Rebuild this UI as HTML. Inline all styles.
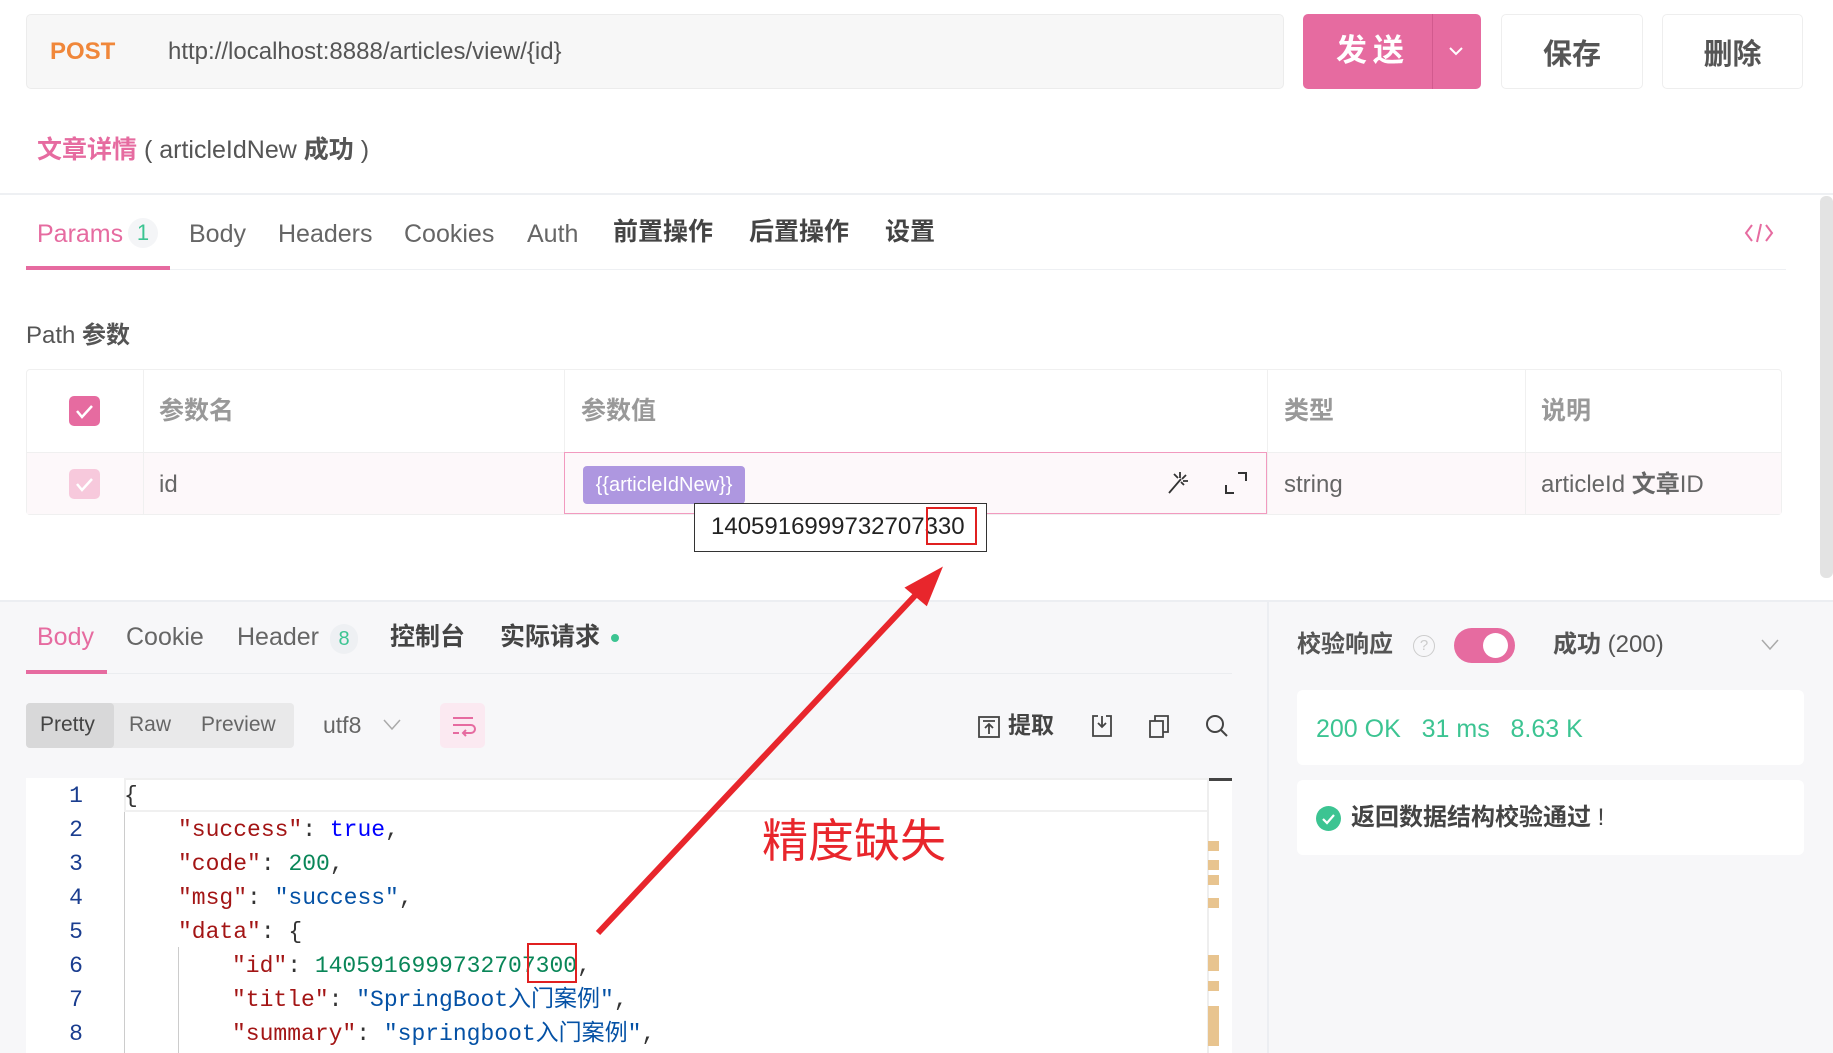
<!DOCTYPE html>
<html><head><meta charset="utf-8">
<style>
*{box-sizing:border-box;margin:0;padding:0}
body{width:1833px;height:1053px;overflow:hidden;background:#fff;font-family:"Liberation Sans","Noto Sans CJK SC",sans-serif;color:#555;position:relative}
.a{position:absolute;white-space:nowrap;line-height:1.25}
.btn{position:absolute;border:1px solid #eee;border-radius:5px;background:#fff;font-size:29px;font-weight:bold;color:#555;display:flex;align-items:center;justify-content:center}
.tab{position:absolute;font-size:25px;color:#666;top:216px;line-height:32px;white-space:nowrap}
.cb{position:absolute;font-size:25px;color:#999;font-weight:bold;line-height:32px}
.ln{position:absolute;left:26px;width:100px;text-align:center;color:#1a3d8f;font-family:"Liberation Mono",monospace;font-size:23px;line-height:30px}
.code{position:absolute;left:178px;white-space:pre;font-family:"Liberation Mono","Noto Sans CJK SC",monospace;font-size:23px;color:#333;line-height:30px;height:30px}
.k{color:#a31515}.s{color:#0451a5}.n{color:#098658}.b{color:#0000ff}
</style></head><body>
<div class="a" style="left:26px;top:14px;width:1258px;height:75px;background:#f7f7f7;border:1px solid #ececec;border-radius:5px"></div>
<div class="a" style="left:50px;top:37px;font-size:24px;font-weight:bold;color:#f0873a">POST</div>
<div class="a" style="left:168px;top:37px;font-size:24px;color:#555">http://localhost:8888/articles/view/{id}</div>
<div class="a" style="left:1303px;top:14px;width:178px;height:75px;background:#e66ba0;border-radius:5px"></div>
<div class="a" style="left:1432px;top:14px;width:1px;height:75px;background:#d25a8e"></div>
<div class="a" style="left:1336px;top:32px;font-size:31px;font-weight:bold;color:#fff;letter-spacing:6px">发送</div>
<svg class="a" style="left:1448px;top:45px" width="16" height="12"><path d="M2 3l6 6 6-6" stroke="#fff" stroke-width="2" fill="none"/></svg>
<div class="btn" style="left:1501px;top:14px;width:142px;height:75px">保存</div>
<div class="btn" style="left:1662px;top:14px;width:141px;height:75px">删除</div>
<div class="a" style="left:37px;top:134px;font-size:25px;line-height:32px;height:32px"><span style="color:#e66ba0;font-weight:bold">文章详情</span> <span style="color:#555">( articleIdNew <b>成功</b> )</span></div>
<div class="a" style="left:0;top:193px;width:1833px;height:2px;background:#eef0f3"></div>
<div class="tab" style="left:37px;color:#e66ba0;top:218px">Params</div>
<div class="a" style="left:128px;top:218px;width:30px;height:30px;border-radius:15px;background:#f4f5f7;color:#3cc492;font-size:22px;text-align:center;line-height:30px">1</div>
<div class="tab" style="left:189px;top:218px">Body</div>
<div class="tab" style="left:278px;top:218px">Headers</div>
<div class="tab" style="left:404px;top:218px">Cookies</div>
<div class="tab" style="left:527px;top:218px">Auth</div>
<div class="tab" style="left:613px;font-weight:bold;color:#444">前置操作</div>
<div class="tab" style="left:749px;font-weight:bold;color:#444">后置操作</div>
<div class="tab" style="left:885px;font-weight:bold;color:#444">设置</div>
<div class="a" style="left:26px;top:269px;width:1760px;height:1px;background:#eef0f3"></div>
<div class="a" style="left:26px;top:266px;width:144px;height:4px;background:#e66ba0"></div>
<svg class="a" style="left:1743px;top:221px" width="32" height="24"><path d="M9 4L3 12l6 8M23 4l6 8-6 8M18 3l-4 18" stroke="#e66ba0" stroke-width="2" fill="none"/></svg>
<div class="a" style="left:1820px;top:196px;width:13px;height:382px;background:#e3e3e3;border-radius:6px"></div>
<div class="a" style="left:26px;top:320px;font-size:24px;color:#555;line-height:32px">Path <b>参数</b></div>
<div class="a" style="left:26px;top:369px;width:1756px;height:146px;border:1px solid #f0f0f0;border-radius:4px"></div>
<div class="a" style="left:27px;top:452px;width:1754px;height:62px;background:#fdf8fa;border-top:1px solid #f0f0f0"></div>
<div class="a" style="left:143px;top:370px;width:1px;height:144px;background:#f0f0f0"></div>
<div class="a" style="left:564px;top:370px;width:1px;height:144px;background:#f0f0f0"></div>
<div class="a" style="left:1267px;top:370px;width:1px;height:144px;background:#f0f0f0"></div>
<div class="a" style="left:1525px;top:370px;width:1px;height:144px;background:#f0f0f0"></div>
<div class="a" style="left:69px;top:396px;width:31px;height:30px;background:#e66ba0;border-radius:5px"></div>
<svg class="a" style="left:69px;top:396px" width="31" height="30"><path d="M8 15l5 6 10-11" stroke="#fff" stroke-width="2.5" fill="none"/></svg>
<div class="a" style="left:69px;top:469px;width:31px;height:30px;background:#f7c9dc;border-radius:5px"></div>
<svg class="a" style="left:69px;top:469px" width="31" height="30"><path d="M8 15l5 6 10-11" stroke="#fff" stroke-width="2.5" fill="none"/></svg>
<div class="cb" style="left:159px;top:395px">参数名</div>
<div class="cb" style="left:581px;top:395px">参数值</div>
<div class="cb" style="left:1284px;top:395px">类型</div>
<div class="cb" style="left:1541px;top:395px">说明</div>
<div class="a" style="left:159px;top:469px;font-size:24px;color:#666;line-height:32px">id</div>
<div class="a" style="left:564px;top:452px;width:703px;height:62px;border:1.5px solid #f29abf;background:#fdf8fa"></div>
<div class="a" style="left:583px;top:466px;width:162px;height:38px;background:#ae97e0;border-radius:4px;color:#fff;font-size:20px;line-height:38px;text-align:center">{{articleIdNew}}</div>
<svg class="a" style="left:1166px;top:469px" width="26" height="26"><path d="M3 24L15 10M14 3v6M20 6l-4 4M22 12h-5M8 5l4 4M18 16l-3-3" stroke="#333" stroke-width="1.8" fill="none"/></svg>
<svg class="a" style="left:1224px;top:471px" width="24" height="24"><path d="M14 2h8v8M2 14v8h8" stroke="#333" stroke-width="2" fill="none"/></svg>
<div class="a" style="left:1284px;top:469px;font-size:24px;color:#666;line-height:32px">string</div>
<div class="a" style="left:1541px;top:469px;font-size:24px;color:#666;line-height:32px;height:32px">articleId <b>文章</b>ID</div>
<div class="a" style="left:694px;top:503px;width:293px;height:49px;background:#fff;border:1.5px solid #333"></div>
<div class="a" style="left:711px;top:512px;font-size:24px;color:#222">1405916999732707330</div>
<div class="a" style="left:926px;top:507px;width:51px;height:38px;border:2.5px solid #e02020"></div>
<div class="a" style="left:0;top:600px;width:1833px;height:453px;background:#f7f7f9;border-top:2px solid #eceef2"></div>
<div class="a" style="left:1267px;top:602px;width:2px;height:451px;background:#eceef2"></div>
<div class="a" style="left:37px;top:621px;font-size:25px;color:#e66ba0;line-height:32px">Body</div>
<div class="a" style="left:126px;top:621px;font-size:25px;color:#666;line-height:32px">Cookie</div>
<div class="a" style="left:237px;top:621px;font-size:25px;color:#666;line-height:32px">Header</div>
<div class="a" style="left:330px;top:624px;width:28px;height:30px;border-radius:14px;background:#eef0f3;color:#3cc492;font-size:20px;text-align:center;line-height:30px">8</div>
<div class="a" style="left:390px;top:621px;font-size:25px;color:#444;font-weight:bold;line-height:32px">控制台</div>
<div class="a" style="left:500px;top:621px;font-size:25px;color:#444;font-weight:bold;line-height:32px">实际请求</div>
<div class="a" style="left:611px;top:634px;width:8px;height:8px;border-radius:4px;background:#3cc492"></div>
<div class="a" style="left:26px;top:673px;width:1206px;height:1px;background:#ebedf0"></div>
<div class="a" style="left:26px;top:670px;width:81px;height:4px;background:#e66ba0"></div>
<div class="a" style="left:26px;top:703px;width:268px;height:45px;background:#e9e9ea;border-radius:4px"></div>
<div class="a" style="left:26px;top:703px;width:88px;height:45px;background:#d8d8d9;border-radius:4px"></div>
<div class="a" style="left:40px;top:712px;font-size:21px;color:#444">Pretty</div>
<div class="a" style="left:129px;top:712px;font-size:21px;color:#666">Raw</div>
<div class="a" style="left:201px;top:712px;font-size:21px;color:#666">Preview</div>
<div class="a" style="left:323px;top:711px;font-size:23px;color:#666">utf8</div>
<svg class="a" style="left:382px;top:718px" width="20" height="14"><path d="M2 2l8 9 8-9" stroke="#aaa" stroke-width="1.5" fill="none"/></svg>
<div class="a" style="left:440px;top:703px;width:45px;height:45px;background:#fbe9f1;border-radius:5px"></div>
<svg class="a" style="left:450px;top:713px" width="26" height="26"><path d="M3 5h20M3 12h18a4 4 0 010 8h-7M3 20h6M16 17l-3 3 3 3" stroke="#e66ba0" stroke-width="2" fill="none"/></svg>
<svg class="a" style="left:977px;top:715px" width="24" height="24"><rect x="2" y="2" width="20" height="20" fill="none" stroke="#444" stroke-width="1.8"/><path d="M6 6h12M12 9v10M8 13l4-4 4 4" stroke="#444" stroke-width="1.8" fill="none"/></svg>
<div class="a" style="left:1008px;top:710px;font-size:23px;font-weight:bold;color:#444;line-height:30px">提取</div>
<svg class="a" style="left:1090px;top:713px" width="24" height="26"><path d="M8 3H3v20h18V3h-5M12 3v11M8 10l4 4 4-4" stroke="#444" stroke-width="1.8" fill="none"/></svg>
<svg class="a" style="left:1147px;top:713px" width="26" height="26"><rect x="3" y="8" width="13" height="16" fill="none" stroke="#444" stroke-width="1.8"/><path d="M8 8V3h13v16h-5" stroke="#444" stroke-width="1.8" fill="none"/></svg>
<svg class="a" style="left:1204px;top:713px" width="26" height="26"><circle cx="11" cy="11" r="8" fill="none" stroke="#444" stroke-width="2"/><path d="M17 17l6 6" stroke="#444" stroke-width="2"/></svg>
<div class="a" style="left:26px;top:778px;width:1206px;height:275px;background:#fff"></div>
<div class="a" style="left:124px;top:778px;width:1085px;height:34px;border:2px solid #f0f0f0"></div>
<div class="a" style="left:1209px;top:778px;width:23px;height:3px;background:#444"></div>
<div class="a" style="left:1207px;top:778px;width:2px;height:275px;background:#eee"></div>
<div class="a" style="left:124px;top:812px;width:1px;height:241px;background:#ccc"></div>
<div class="a" style="left:178px;top:947px;width:1px;height:106px;background:#ccc"></div>
<div class="a" style="left:1208px;top:841px;width:11px;height:10px;background:#e8c48f"></div>
<div class="a" style="left:1208px;top:860px;width:11px;height:10px;background:#e8c48f"></div>
<div class="a" style="left:1208px;top:875px;width:11px;height:10px;background:#e8c48f"></div>
<div class="a" style="left:1208px;top:898px;width:11px;height:10px;background:#e8c48f"></div>
<div class="a" style="left:1208px;top:955px;width:11px;height:16px;background:#e8c48f"></div>
<div class="a" style="left:1208px;top:981px;width:11px;height:10px;background:#e8c48f"></div>
<div class="a" style="left:1208px;top:1006px;width:11px;height:40px;background:#e8c48f"></div>
<div class="ln" style="top:781px">1</div><div class="ln" style="top:815px">2</div><div class="ln" style="top:849px">3</div><div class="ln" style="top:883px">4</div><div class="ln" style="top:917px">5</div><div class="ln" style="top:951px">6</div><div class="ln" style="top:985px">7</div><div class="ln" style="top:1019px">8</div>
<div class="code" style="left:124px;top:781px">{</div>
<div class="code" style="top:815px"><span class="k">"success"</span>: <span class="b">true</span>,</div>
<div class="code" style="top:849px"><span class="k">"code"</span>: <span class="n">200</span>,</div>
<div class="code" style="top:883px"><span class="k">"msg"</span>: <span class="s">"success"</span>,</div>
<div class="code" style="top:917px"><span class="k">"data"</span>: {</div>
<div class="code" style="left:232px;top:951px"><span class="k">"id"</span>: <span class="n">1405916999732707300</span>,</div>
<div class="code" style="left:232px;top:985px"><span class="k">"title"</span>: <span class="s">"SpringBoot入门案例"</span>,</div>
<div class="code" style="left:232px;top:1019px"><span class="k">"summary"</span>: <span class="s">"springboot入门案例"</span>,</div>
<div class="a" style="left:527px;top:943px;width:50px;height:40px;border:2.5px solid #e02020"></div>
<div class="a" style="left:762px;top:813px;font-size:46px;color:#e8262c">精度缺失</div>
<svg class="a" style="left:0;top:0" width="1833" height="1053"><path d="M598 933L925 585" stroke="#e8262c" stroke-width="6"/><path d="M939 571L908 588L926 603Z" fill="#e8262c" stroke="#e8262c" stroke-width="4"/></svg>
<div class="a" style="left:1297px;top:629px;font-size:24px;font-weight:bold;color:#555;line-height:32px">校验响应</div>
<div class="a" style="left:1413px;top:635px;width:22px;height:22px;border:1.5px solid #ccc;border-radius:11px;color:#ccc;font-size:15px;text-align:center;line-height:19px">?</div>
<div class="a" style="left:1454px;top:628px;width:61px;height:35px;border-radius:18px;background:#e66ba0"></div>
<div class="a" style="left:1483px;top:633px;width:25px;height:25px;border-radius:13px;background:#fff"></div>
<div class="a" style="left:1553px;top:629px;font-size:24px;color:#555;line-height:32px;height:32px"><b>成功</b> (200)</div>
<svg class="a" style="left:1760px;top:638px" width="20" height="14"><path d="M2 2l8 9 8-9" stroke="#aaa" stroke-width="1.5" fill="none"/></svg>
<div class="a" style="left:1297px;top:690px;width:507px;height:75px;background:#fff;border-radius:6px"></div>
<div class="a" style="left:1316px;top:714px;font-size:25px;color:#3cc492">200 OK &nbsp;&nbsp;31 ms &nbsp;&nbsp;8.63 K</div>
<div class="a" style="left:1297px;top:780px;width:507px;height:75px;background:#fff;border-radius:6px"></div>
<div class="a" style="left:1316px;top:806px;width:25px;height:25px;border-radius:13px;background:#3cc492"></div>
<svg class="a" style="left:1316px;top:806px" width="25" height="25"><path d="M7 13l4 4 7-8" stroke="#fff" stroke-width="2.2" fill="none"/></svg>
<div class="a" style="left:1351px;top:802px;font-size:24px;font-weight:bold;color:#444;line-height:32px">返回数据结构校验通过 <span style="font-weight:normal">!</span></div>
</body></html>
